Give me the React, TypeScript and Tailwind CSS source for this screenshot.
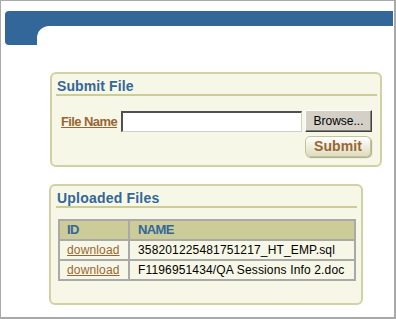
import { Fragment } from "react";

export default function App() {
  const rows = [
    { id: "download", name: "358201225481751217_HT_EMP.sql" },
    { id: "download", name: "F1196951434/QA Sessions Info 2.doc" },
  ];
  return (
    <div className="w-[396px] h-[319px] overflow-hidden bg-white border-t border-l border-r-2 border-b-2 border-[#a9a9a9] font-['Liberation_Sans',Arial,sans-serif]">
      {/* header band */}
      <div className="mt-[10px] ml-[4px] mr-[1px] h-[34px] bg-[#336699] rounded-l-[4px] flex">
        <div className="w-[32px]" />
        <div className="flex-1 pt-[15px]">
          <div className="h-full bg-white rounded-tl-[12px]" />
        </div>
      </div>

      {/* Submit File box */}
      <div className="mt-[27px] ml-[49px] w-[332px] border-2 border-[#d1d1a3] rounded-[6px] bg-[#f7f7e7] pt-[4px] pb-[8px]">
        <div className="ml-[4px] mr-[3px] pl-[1px] border-b-2 border-[#cccc99] text-[14px] leading-[16px] font-bold text-[#336699] tracking-[0.1px]">
          Submit File
        </div>
        <div className="mt-[14px] flex items-center pl-[9px]">
          <div className="w-[60px] text-[13px] leading-[15px] font-bold text-[#996633] underline tracking-[-0.6px]">
            File Name
          </div>
          <div className="w-[181px] h-[21px] bg-white border-t-2 border-l-2 border-b border-r border-t-[#505050] border-l-[#505050] border-b-[#d4d0c8] border-r-[#d4d0c8]" />
          <div className="ml-[3px] w-[67px] h-[22px] bg-[#d4d0c8] border border-t-white border-l-white border-r-[#404040] border-b-[#404040] shadow-[inset_-1px_-1px_0_#808080] flex items-center justify-center text-[12px] text-black">
            Browse...
          </div>
        </div>
        <div className="mt-[4px] flex justify-end pr-[9px]">
          <div className="w-[66px] h-[21px] rounded-[5px] border border-[#c4c496] bg-gradient-to-b from-[#ffffff] to-[#deddbe] shadow-[1px_1px_1px_#a8a890] flex items-center justify-center text-[14px] font-bold text-[#996633] tracking-[0.1px]">
            Submit
          </div>
        </div>
      </div>

      {/* Uploaded Files box */}
      <div className="mt-[17px] ml-[48px] w-[314px] border-2 border-[#d1d1a3] rounded-[6px] bg-[#f7f7e7] pt-[4px] pb-[22px]">
        <div className="ml-[5px] mr-[4px] pl-[1px] border-b-2 border-[#cccc99] text-[14px] leading-[16px] font-bold text-[#336699] tracking-[0.2px]">
          Uploaded Files
        </div>
        <div className="mt-[11px] ml-[7px] w-[298px] bg-[#a9a9a9] p-[2px] grid grid-cols-[68px_224px] gap-[2px]">
          <div className="h-[18px] bg-[#cccc99] pl-[7px] flex items-center text-[13px] font-bold text-[#336699] tracking-[-0.6px]">
            ID
          </div>
          <div className="h-[18px] bg-[#cccc99] pl-[8px] flex items-center text-[13px] font-bold text-[#336699] tracking-[-0.6px]">
            NAME
          </div>
          {rows.map((r, i) => (
            <Fragment key={i}>
              <div className="h-[18px] bg-[#f7f7e7] pl-[7px] flex items-center text-[12px] text-[#996633] underline tracking-[0.15px]">
                {r.id}
              </div>
              <div className="h-[18px] bg-[#f7f7e7] pl-[8px] flex items-center text-[12px] text-black tracking-[0.15px] whitespace-nowrap">
                {r.name}
              </div>
            </Fragment>
          ))}
        </div>
      </div>
    </div>
  );
}
